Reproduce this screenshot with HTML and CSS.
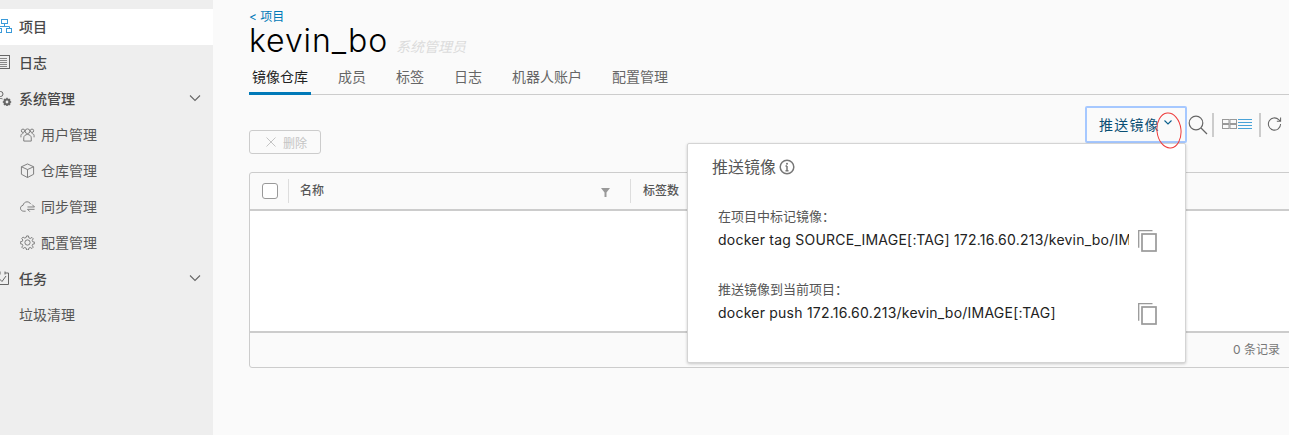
FILE: index.html
```html
<!DOCTYPE html>
<html lang="zh">
<head>
<meta charset="utf-8">
<title>kevin_bo</title>
<link rel="stylesheet" href="styles.css">
</head>
<body>
<aside class="sidebar">
  <a class="nav-item active"><svg class="nav-icon" viewBox="0 0 16 16" fill="none" stroke="#3a9ad9"><rect x="5.500" y="1.500" width="6" height="4"/><rect x="-0.500" y="10.500" width="6" height="4"/><rect x="10.500" y="10.500" width="5" height="4"/><path d="M8.500 5.500v3M2.500 10.500v-2h11v2"/></svg><span>项目</span></a>
  <a class="nav-item"><svg class="nav-icon" viewBox="0 0 16 16" fill="none" stroke="#666"><rect x="1.500" y="1.500" width="12" height="13"/><path d="M4 4.500h7M4 6.500h7M4 8.500h7M4 10.500h7M4 12.500h7" stroke="#888"/></svg><span>日志</span></a>
  <a class="nav-item has-caret"><svg class="nav-icon" viewBox="0 0 16 16" fill="none" stroke="#666"><circle cx="4.500" cy="4" r="2.500"/><path d="M0 13.500v-2c0-2 2-3 4.500-3 1 0 1.500.2 2 .4"/><circle cx="11" cy="12" r="2.500" stroke-width="2.200"/><path d="M11 7.800v1.200M11 15v1.200M6.800 12H8M14 12h1.200M8 9l1 1M13 14l1 1M14 9l-1 1M9 14l-1 1" stroke-width="1.500"/></svg><span>系统管理</span><svg class="caret" viewBox="0 0 12 8" fill="none" stroke="#666" stroke-width="1.100"><path d="M1 1.500l5 5 5-5"/></svg></a>
  <a class="nav-sub"><svg class="sub-icon" viewBox="0 0 16 16" fill="none" stroke="#777"><circle cx="8" cy="4.500" r="2.500"/><circle cx="3.200" cy="4" r="1.800"/><circle cx="12.800" cy="4" r="1.800"/><path d="M4 15v-3.500c0-2 1.800-3.500 4-3.500s4 1.500 4 3.500V15zM1 11V9c0-1 1-2 2.500-2M15 11V9c0-1-1-2-2.500-2"/></svg><span>用户管理</span></a>
  <a class="nav-sub"><svg class="sub-icon" viewBox="0 0 16 16" fill="none" stroke="#777"><path d="M8 1l6.500 3v8L8 15.500 1.500 12V4zM1.500 4L8 7l6.500-3M8 7v8.500"/></svg><span>仓库管理</span></a>
  <a class="nav-sub"><svg class="sub-icon" viewBox="0 0 16 16" fill="none" stroke="#777"><path d="M6 13H4c-2 0-3.500-1.300-3.500-3.200 0-1.600 1.200-2.800 2.700-3C3.700 4.500 5.500 3 7.500 3c1.700 0 3.100.9 3.800 2.300M8 8.500h7.500M13 6l2.500 2.500M15.500 11H8M10.500 13.500L8 11"/></svg><span>同步管理</span></a>
  <a class="nav-sub"><svg class="sub-icon" viewBox="0 0 16 16" fill="none" stroke="#777"><circle cx="8" cy="8" r="2.800"/><path d="M7 1h2l.4 2 1.500.7L12.700 2.600l1.400 1.400-1.100 1.800.7 1.500 2 .4v1.600l-2 .4-.7 1.500 1.100 1.800-1.400 1.400-1.800-1.100-1.500.7-.4 2H7l-.4-2-1.500-.7-1.800 1.100-1.400-1.400 1.100-1.800-.7-1.500-2-.4V7.300l2-.4.7-1.500-1.100-1.800 1.400-1.400 1.800 1.100 1.500-.7z"/></svg><span>配置管理</span></a>
  <a class="nav-item has-caret"><svg class="nav-icon" viewBox="0 0 16 16" fill="none" stroke="#666"><path d="M4 3H.5v11.500h12V3H9M4 1.500v3M9 1.500v3M3.500 9l2.500 2.500 4-5.500"/></svg><span>任务</span><svg class="caret" viewBox="0 0 12 8" fill="none" stroke="#666" stroke-width="1.100"><path d="M1 1.500l5 5 5-5"/></svg></a>
  <a class="nav-leaf">垃圾清理</a>
</aside>

<main class="content">
  <a class="crumb">&lt; 项目</a>
  <div class="title-row">
    <h1 class="title">kevin_bo</h1>
    <span class="role">系统管理员</span>
  </div>
  <nav class="tabs">
    <a class="tab tab-active">镜像仓库</a>
    <a class="tab">成员</a>
    <a class="tab">标签</a>
    <a class="tab">日志</a>
    <a class="tab">机器人账户</a>
    <a class="tab">配置管理</a>
  </nav>

  <div class="toolbar">
    <div class="delete-btn"><svg class="delete-x" viewBox="0 0 10 10" fill="none" stroke="#c4c4c4"><path d="M.5.500l9 9M9.500.500l-9 9"/></svg><span>删除</span></div>
    <div class="tools">
      <div class="push-btn"><span>推送镜像</span><svg class="push-caret" viewBox="0 0 8 5" fill="none" stroke="#0a5f8c" stroke-width="1.100"><path d="M.5.500L4 4 7.500.500"/></svg></div>
      <svg class="tool-search" viewBox="0 0 20 20" fill="none" stroke="#666" stroke-width="1.200"><circle cx="8" cy="8" r="6.800"/><path d="M13 13l6 6"/></svg>
      <i class="tool-sep"></i>
      <svg class="tool-grid" viewBox="0 0 15 10" fill="none" stroke="#999"><rect x=".5" y=".5" width="6.500" height="4"/><rect x="8" y=".5" width="6.500" height="4"/><rect x=".5" y="5.500" width="6.500" height="4"/><rect x="8" y="5.500" width="6.500" height="4"/></svg>
      <svg class="tool-list" viewBox="0 0 14 10" fill="none" stroke="#49a3d8"><path d="M0 .500h14M0 3.500h14M0 6.500h14M0 9.500h14"/></svg>
      <i class="tool-sep tool-sep-2"></i>
      <svg class="tool-refresh" viewBox="0 0 16 16" fill="none" stroke="#666" stroke-width="1.100"><path d="M14.500 8a6.500 6.500 0 1 1-2-4.700L14.500 5M14.500 1v4h-4"/></svg>
    </div>
  </div>

  <section class="grid">
    <div class="grid-head">
      <span class="check"></span>
      <i class="col-sep"></i>
      <span class="col-name">名称<svg class="filter" viewBox="0 0 9 9" fill="#999"><path d="M0 0h9L5.500 4.500V9h-2V4.500z"/></svg></span>
      <i class="col-sep col-sep-tags"></i>
      <span class="col-tags">标签数</span>
    </div>
    <div class="grid-body"></div>
    <div class="grid-foot">0 条记录</div>
  </section>

  <div class="popover">
    <h2 class="pop-title">推送镜像<svg class="info" viewBox="0 0 16 16" fill="none" stroke="#777" stroke-width="1.500"><circle cx="8" cy="8" r="6.800"/><path d="M8 7v4.500M6.500 11.800h3M6.500 7h1.500"/><circle cx="8" cy="4.700" r="1" fill="#777" stroke="none"/></svg></h2>
    <div class="cmd-block">
      <div class="cmd-label">在项目中标记镜像：</div>
      <div class="cmd-row">
        <div class="cmd-text">docker tag SOURCE_IMAGE[:TAG] 172.16.60.213/kevin_bo/IMAGE[:TAG]</div>
        <svg class="copy" viewBox="0 0 19 22" fill="none" stroke="#999"><path d="M14.500.700H.700v17" stroke-width="1.300"/><rect x="4" y="4" width="14" height="17" stroke-width="1.700"/></svg>
      </div>
    </div>
    <div class="cmd-block">
      <div class="cmd-label">推送镜像到当前项目：</div>
      <div class="cmd-row">
        <div class="cmd-text">docker push 172.16.60.213/kevin_bo/IMAGE[:TAG]</div>
        <svg class="copy" viewBox="0 0 19 22" fill="none" stroke="#999"><path d="M14.500.700H.700v17" stroke-width="1.300"/><rect x="4" y="4" width="14" height="17" stroke-width="1.700"/></svg>
      </div>
    </div>
  </div>
  <svg class="annotation" viewBox="0 0 26 37" fill="none" stroke="#ee3b3b"><ellipse cx="13" cy="18.500" rx="12" ry="17.500" transform="rotate(-6 13 18.500)"/></svg>
</main>
</body>
</html>
```

FILE: styles.css
```css
* { box-sizing: border-box; }
html, body { margin: 0; height: 100%; }
body {
  display: flex;
  width: 1289px;
  height: 435px;
  overflow: hidden;
  background: #fafafa;
  color: #333;
  font-family: Inter, "Noto Sans CJK SC", sans-serif;
  font-size: 14px;
}

/* Sidebar */
.sidebar {
  flex: 0 0 213px;
  padding-top: 9px;
  background: #eeeeee;
}
.nav-item, .nav-sub, .nav-leaf {
  display: flex;
  align-items: center;
  height: 36px;
  padding-bottom: 2px;
  font-family: "Noto Sans CJK SC", sans-serif;
  color: #565656;
}
.nav-item { font-weight: 500; color: #484848; }
.nav-item.active { background: #fff; }
.nav-icon { width: 16px; height: 16px; margin: 0 7px 0 -4px; flex: none; }
.nav-item.has-caret { padding-right: 12px; }
.caret { width: 12px; height: 8px; margin-left: auto; }
.nav-sub { padding-left: 20px; }
.sub-icon { width: 15px; height: 15px; margin-right: 6px; flex: none; }
.nav-leaf { padding-left: 19px; }

/* Main */
.content {
  position: relative;
  flex: 1;
  min-width: 0;
  padding-left: 36px;
  padding-top: 10px;
}
.crumb {
  display: block;
  height: 14px;
  font-family: Inter, "Noto Sans CJK SC", sans-serif;
  font-size: 12px;
  line-height: 14px;
  color: #0079b8;
}
.title-row {
  display: flex;
  align-items: baseline;
  height: 35px;
}
.title {
  margin: 0;
  font-family: Inter, sans-serif;
  font-size: 32px;
  font-weight: 300;
  line-height: 34px;
  letter-spacing: .9px;
  color: #000;
}
.role {
  margin-left: 8px;
  font-family: "Noto Sans CJK SC", sans-serif;
  font-size: 14px;
  font-style: italic;
  color: #dcdcdc;
}
.tabs {
  display: flex;
  height: 36px;
  padding-top: 6px;
  border-bottom: 1px solid #ccc;
}
.tab {
  height: 30px;
  padding: 0 3px;
  margin-right: 24px;
  font-family: "Noto Sans CJK SC", sans-serif;
  line-height: 22px;
  color: #666;
}
.tab-active {
  color: #222;
  border-bottom: 3px solid #0079b8;
}

/* Toolbar */
.toolbar {
  display: flex;
  justify-content: space-between;
  height: 77px;
  padding-top: 11px;
}
.delete-btn {
  display: flex;
  align-items: center;
  width: 72px;
  height: 24px;
  margin-top: 24px;
  padding-left: 16px;
  border: 1px solid #ccc;
  border-radius: 3px;
  font-family: "Noto Sans CJK SC", sans-serif;
  font-size: 12px;
  color: #c4c4c4;
}
.delete-x { width: 10px; height: 10px; margin-right: 7px; }
.tools {
  display: flex;
  align-items: flex-start;
  flex: 0 0 auto;
  margin-right: 7px;
}
.push-btn {
  display: flex;
  align-items: center;
  width: 102px;
  height: 37px;
  padding-left: 12px;
  padding-bottom: 2px;
  border: 2px solid #a6c8ff;
  border-radius: 2px;
  font-family: "Noto Sans CJK SC", sans-serif;
  font-size: 14px;
  letter-spacing: 1.2px;
  color: #0a4f74;
}
.push-caret { width: 8px; height: 5px; margin-left: 4px; margin-top: -3px; }
.tool-search { width: 20px; height: 20px; margin: 9px 0 0 1px; }
.tool-sep { width: 2px; height: 24px; margin: 7px 8px 0 4px; background: #ccc; }
.tool-grid { width: 15px; height: 10px; margin-top: 13px; }
.tool-list { width: 14px; height: 10px; margin: 13px 0 0 1px; }
.tool-sep-2 { margin-left: 7px; margin-right: 6px; }
.tool-refresh { width: 15px; height: 16px; margin-top: 10px; }

/* Data grid */
.grid {
  width: 1100px;
  height: 196px;
  border: 1px solid #ccc;
  border-radius: 3px;
  background: #fafafa;
}
.grid-head {
  display: flex;
  align-items: center;
  height: 38px;
  border-bottom: 2px solid #ccc;
  font-family: "Noto Sans CJK SC", sans-serif;
  font-size: 12px;
  font-weight: 500;
  color: #565656;
}
.check {
  width: 16px;
  height: 16px;
  margin-left: 12px;
  border: 1px solid #999;
  border-radius: 3px;
  background: #fff;
}
.col-sep { width: 1px; height: 24px; margin-left: 10px; background: #ddd; }
.col-sep-tags { margin-left: 0; }
.col-name {
  display: flex;
  align-items: center;
  width: 341px;
  padding-left: 11px;
  padding-bottom: 3px;
}
.filter { width: 9px; height: 9px; margin-left: auto; margin-right: 20px; margin-top: 5px; }
.col-tags { margin-left: 12px; padding-bottom: 3px; }
.grid-body { height: 120px; background: #fff; }
.grid-foot {
  height: 36px;
  border-top: 2px solid #ccc;
  padding-left: 983px;
  font-size: 12px;
  line-height: 33px;
  color: #777;
}

/* Popover */
.popover {
  position: absolute;
  left: 474px;
  top: 143px;
  width: 499px;
  height: 220px;
  padding: 11px 24px;
  background: #fff;
  border: 1px solid #d4d4d4;
  border-radius: 2px;
  box-shadow: 0 1px 3px rgba(0,0,0,.2);
}
.pop-title {
  display: flex;
  align-items: center;
  margin: 0 0 27px;
  height: 22px;
  font-family: "Noto Sans CJK SC", sans-serif;
  font-size: 16px;
  font-weight: 400;
  color: #565656;
}
.info { width: 16px; height: 16px; margin-left: 3px; margin-top: 1px; }
.cmd-block { margin-left: 6px; height: 73px; }
.cmd-label {
  height: 24px;
  font-family: "Noto Sans CJK SC", sans-serif;
  font-size: 13px;
  line-height: 24px;
  color: #565656;
}
.cmd-row { display: flex; align-items: flex-start; }
.cmd-text {
  width: 411px;
  height: 24px;
  overflow: hidden;
  white-space: nowrap;
  font-family: Inter, sans-serif;
  font-size: 14px;
  line-height: 24px;
  letter-spacing: .23px;
  color: #222;
}
.copy { width: 19px; height: 22px; margin: 2px 0 0 9px; flex: none; }
.annotation {
  position: absolute;
  left: 943px;
  top: 112px;
  width: 26px;
  height: 37px;
}
```
